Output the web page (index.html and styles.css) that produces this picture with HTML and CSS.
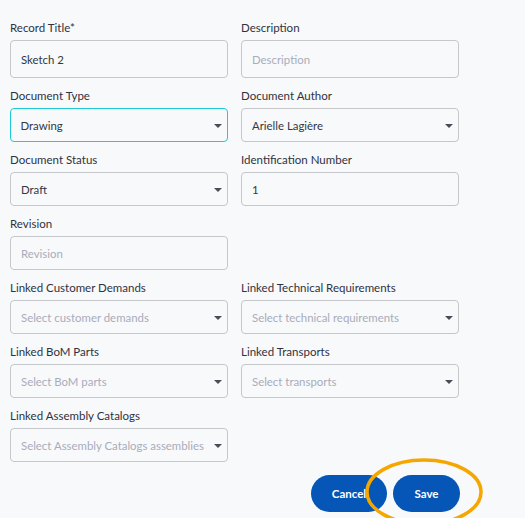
FILE: index.html
```html
<!DOCTYPE html>
<html>
<head>
<meta charset="utf-8">
<link rel="stylesheet" href="styles.css">
</head>
<body>
<div class="page">
  <form class="form">
    <div class="field">
      <label class="label">Record Title*</label>
      <div class="box tall"><span class="value">Sketch 2</span></div>
    </div>
    <div class="field">
      <label class="label">Description</label>
      <div class="box tall"><span class="ph">Description</span></div>
    </div>
    <div class="field">
      <label class="label">Document Type</label>
      <div class="box select focus"><span class="value">Drawing</span><span class="caret"></span></div>
    </div>
    <div class="field">
      <label class="label">Document Author</label>
      <div class="box select"><span class="value">Arielle Lagière</span><span class="caret"></span></div>
    </div>
    <div class="field">
      <label class="label">Document Status</label>
      <div class="box select"><span class="value">Draft</span><span class="caret"></span></div>
    </div>
    <div class="field">
      <label class="label">Identification Number</label>
      <div class="box"><span class="value">1</span></div>
    </div>
    <div class="field">
      <label class="label">Revision</label>
      <div class="box"><span class="ph">Revision</span></div>
    </div>
    <div class="field empty"></div>
    <div class="field">
      <label class="label">Linked Customer Demands</label>
      <div class="box select"><span class="ph">Select customer demands</span><span class="caret"></span></div>
    </div>
    <div class="field">
      <label class="label">Linked Technical Requirements</label>
      <div class="box select"><span class="ph">Select technical requirements</span><span class="caret"></span></div>
    </div>
    <div class="field">
      <label class="label">Linked BoM Parts</label>
      <div class="box select"><span class="ph">Select BoM parts</span><span class="caret"></span></div>
    </div>
    <div class="field">
      <label class="label">Linked Transports</label>
      <div class="box select"><span class="ph">Select transports</span><span class="caret"></span></div>
    </div>
    <div class="field">
      <label class="label">Linked Assembly Catalogs</label>
      <div class="box select"><span class="ph">Select Assembly Catalogs assemblies</span><span class="caret"></span></div>
    </div>
  </form>
  <div class="actions">
    <button class="btn cancel" type="button">Cancel</button>
    <button class="btn save" type="button">Save</button>
  </div>
  <svg class="highlight" width="130" height="80" viewBox="0 0 130 80">
    <ellipse cx="65" cy="40" rx="57" ry="32" fill="none" stroke="#f5a700" stroke-width="3.5"/>
  </svg>
</div>
</body>
</html>
```
FILE: styles.css
```css
html { background: #ffffff; }
body {
  margin: 0;
  font-family: "Lato", "Open Sans", sans-serif;
}
.page {
  position: relative;
  background: #f8f9fb;
  height: 518px;
  width: 525px;
  padding: 21px 0 0 10px;
  box-sizing: border-box;
}
.form {
  display: grid;
  grid-template-columns: 218px 218px;
  column-gap: 13px;
  row-gap: 11px;
}
.field {
  display: flex;
  flex-direction: column;
}
.label {
  font-size: 11.5px;
  line-height: 14px;
  height: 14px;
  color: #2f3240;
  margin-bottom: 5px;
  white-space: nowrap;
}
.box {
  height: 34px;
  box-sizing: border-box;
  border: 1px solid #c6c7ca;
  border-radius: 4px;
  display: flex;
  align-items: center;
  padding: 0 10px;
  font-size: 11.4px;
  position: relative;
  background: transparent;
}
.box.tall { height: 38px; }
.box.focus { border: 1.5px solid #1fc9d6; padding-left: 9.5px; }
.value { color: #343744; white-space: nowrap; }
.ph { color: #a8acba; white-space: nowrap; }
.caret {
  position: absolute;
  right: 5px;
  top: 50%;
  margin-top: -1px;
  width: 0;
  height: 0;
  border-left: 4px solid transparent;
  border-right: 4px solid transparent;
  border-top: 4px solid #4a4d58;
}
.actions {
  display: flex;
  justify-content: flex-end;
  gap: 6px;
  width: 450px;
  margin-top: 13px;
}
.btn {
  height: 37px;
  border: none;
  border-radius: 19px;
  background: #0556b6;
  color: #ffffff;
  font-family: "Lato", sans-serif;
  font-weight: 700;
  font-size: 11.5px;
  padding: 0;
}
.cancel { width: 76px; }
.save { width: 67px; }
.highlight {
  position: absolute;
  left: 359px;
  top: 452px;
}
```
